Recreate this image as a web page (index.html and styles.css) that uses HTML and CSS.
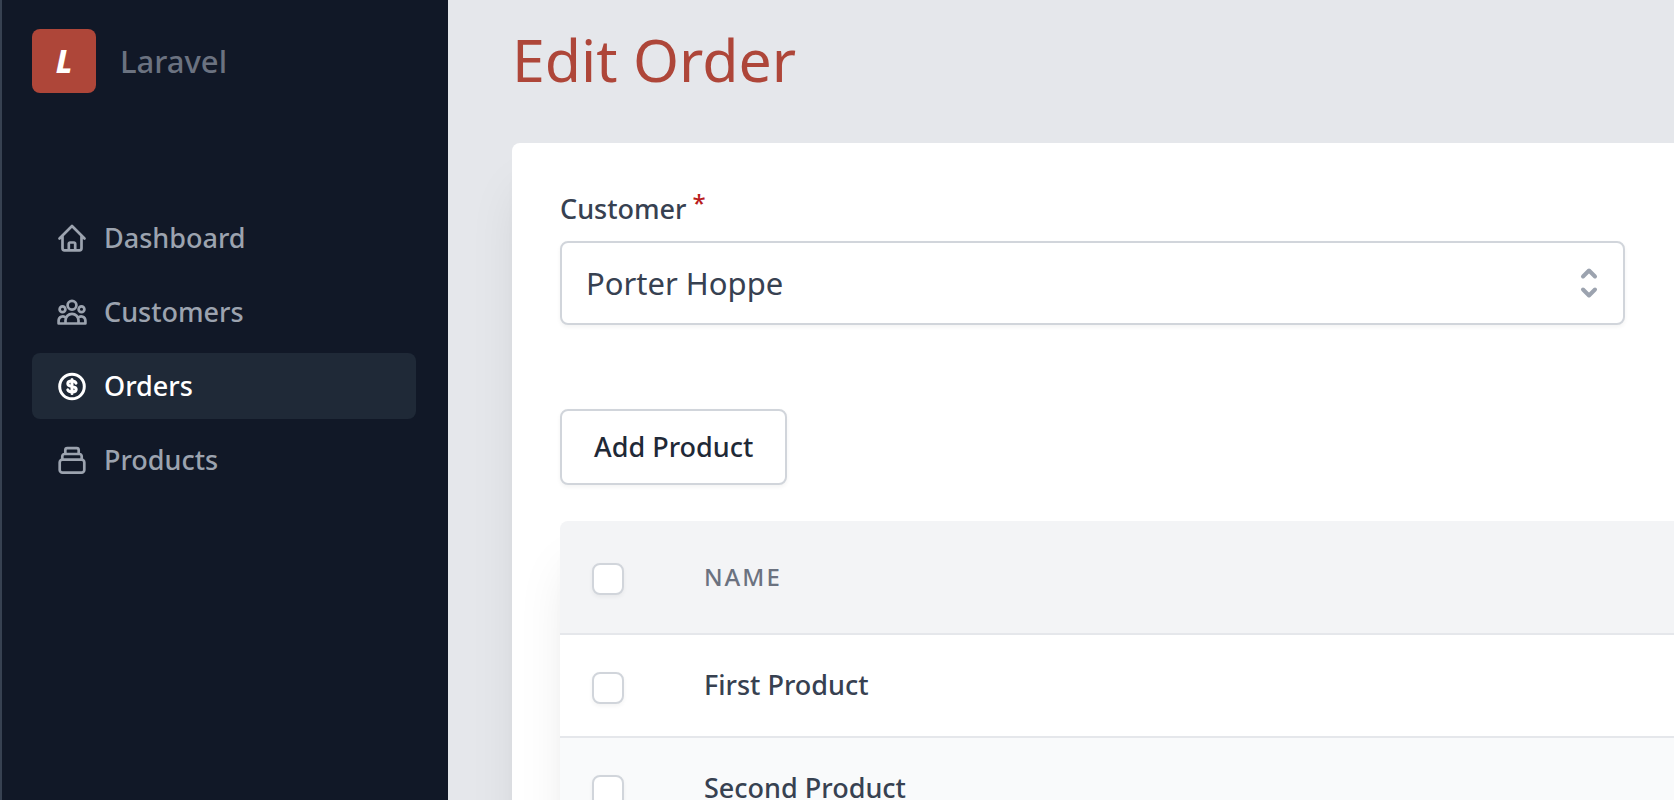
FILE: index.html
```html
<!DOCTYPE html>
<html lang="en">
<head>
<meta charset="utf-8">
<meta name="viewport" content="width=device-width, initial-scale=1">
<title>Edit Order</title>
<link rel="stylesheet" href="styles.css">
</head>
<body>
<div class="app">
  <aside class="sidebar">
    <a class="brand" href="#"><span class="brand-mark">L</span><span>Laravel</span></a>
    <nav class="nav">
      <a class="nav-link" href="#">
        <svg class="icon" viewBox="0 0 32 32" aria-hidden="true"><path d="M3.5 16.500 16 4 28.500 16.500M6.500 14v12.300a2 2 0 0 0 2 2h15a2 2 0 0 0 2-2V14M12.800 28v-6.300a1.200 1.200 0 0 1 1.200-1.200h4a1.200 1.200 0 0 1 1.200 1.200V28"/></svg>
        <span>Dashboard</span>
      </a>
      <a class="nav-link" href="#">
        <svg class="icon" viewBox="0 0 32 32" aria-hidden="true"><circle cx="16" cy="9.200" r="4.400"/><circle cx="6.500" cy="13.200" r="2.900"/><circle cx="25.500" cy="13.200" r="2.900"/><path d="M9.500 27.500v-3.200a6.500 6.500 0 0 1 13 0v3.200ZM9.500 27.500H2.600v-2.800a4.200 4.200 0 0 1 7.200-2.900M22.500 27.500h6.900v-2.800a4.200 4.200 0 0 0-7.200-2.900"/></svg>
        <span>Customers</span>
      </a>
      <a class="nav-link nav-link-active" href="#" aria-current="page">
        <svg class="icon icon-strong" viewBox="0 0 32 32" aria-hidden="true"><circle cx="16" cy="16.500" r="12.300"/><path d="M20 13.100c-.5-1.200-2-2-4-2-2.400 0-4.200 1-4.200 2.700 0 3.900 8.400 1.500 8.400 5.400 0 1.700-1.800 2.700-4.200 2.700-2 0-3.500-.8-4.200-2M16 9.500v14"/></svg>
        <span>Orders</span>
      </a>
      <a class="nav-link" href="#">
        <svg class="icon" viewBox="0 0 32 32" aria-hidden="true"><path d="M9.300 9.500V6.200a2 2 0 0 1 2-2h9.400a2 2 0 0 1 2 2v3.300M6.300 15.500v-3.300a2.200 2.200 0 0 1 2.200-2.200h15a2.200 2.200 0 0 1 2.200 2.200v3.300"/><rect x="3.700" y="15.700" width="24.600" height="13" rx="2.800"/></svg>
        <span>Products</span>
      </a>
    </nav>
  </aside>
  <main class="main">
    <h1 class="title">Edit Order</h1>
    <form class="card">
      <div class="field">
        <label class="label" for="customer">Customer<span class="required">*</span></label>
        <div class="select-wrap">
          <select class="select" id="customer"><option>Porter Hoppe</option></select>
          <svg class="select-icon" viewBox="0 0 40 40" aria-hidden="true"><path d="m14 13.500 6-6 6 6M14 26.500l6 6 6-6"/></svg>
        </div>
      </div>
      <button class="button" type="button">Add Product</button>
      <table class="table">
        <thead>
          <tr><th class="check-cell"><input class="checkbox" type="checkbox" aria-label="Select all"></th><th class="name-cell">NAME</th></tr>
        </thead>
        <tbody>
          <tr><td class="check-cell"><input class="checkbox" type="checkbox" id="p1"></td><td class="name-cell"><label for="p1">First Product</label></td></tr>
          <tr><td class="check-cell"><input class="checkbox" type="checkbox" id="p2"></td><td class="name-cell"><label for="p2">Second Product</label></td></tr>
        </tbody>
      </table>
    </form>
  </main>
</div>
</body>
</html>
```
FILE: styles.css
```css
*, *::before, *::after { box-sizing: border-box; }
body {
  margin: 0;
  font-family: "Noto Sans", "Open Sans", sans-serif;
  font-size: 27px;
  line-height: 40px;
  color: #374151;
}
.app {
  display: flex;
  height: 100vh;
  overflow: hidden;
  background: #e5e7eb;
}
.sidebar {
  flex: 0 0 448px;
  padding: 29px 32px 0 30px;
  border-left: 2px solid #374151;
  background: #111827;
}
.brand {
  display: flex;
  align-items: center;
  gap: 24px;
  color: #6b7280;
  font-size: 31px;
  font-weight: 500;
  text-decoration: none;
}
.brand-mark {
  display: flex;
  align-items: center;
  justify-content: center;
  width: 64px;
  height: 64px;
  border-radius: 8px;
  background: #ae4639;
  color: #fff;
  font-size: 32px;
  font-weight: 800;
  font-style: italic;
}
.nav {
  display: flex;
  flex-direction: column;
  gap: 8px;
  margin-top: 112px;
}
.nav-link {
  display: flex;
  align-items: center;
  gap: 16px;
  padding: 13px 24px;
  border-radius: 8px;
  color: #9ca3af;
  font-weight: 500;
  text-decoration: none;
}
.nav-link-active { background: #1f2937; color: #fff; }
.icon {
  width: 32px;
  height: 32px;
  fill: none;
  stroke: currentColor;
  stroke-width: 2.7;
  stroke-linecap: round;
  stroke-linejoin: round;
}
.icon-strong { stroke-width: 3; }
.main {
  flex: 1;
  min-width: 0;
  padding: 23px 0 0 64px;
}
.title {
  margin: 0 0 48px;
  color: #ae4639;
  font-size: 59px;
  font-weight: 400;
  line-height: 72px;
}
.card {
  padding: 48px 0 48px 48px;
  border-radius: 8px 0 0 8px;
  background: #fff;
  box-shadow: 0 40px 50px -10px rgba(0, 0, 0, .1), 0 20px 20px -10px rgba(0, 0, 0, .04);
}
.field { margin: 0 49px 84px 0; }
.label {
  display: flex;
  gap: 6px;
  margin-bottom: 14px;
  font-weight: 500;
  line-height: 36px;
}
.required {
  color: #b91c1c;
  font-size: 24px;
  line-height: 24px;
}
.select-wrap { position: relative; }
.select {
  display: block;
  width: 100%;
  height: 84px;
  padding: 0 80px 0 24px;
  border: 2px solid #d1d5db;
  border-radius: 8px;
  appearance: none;
  background: #fff;
  color: #374151;
  font: inherit;
  font-size: 31px;
  box-shadow: 0 2px 4px rgba(0, 0, 0, .05);
}
.select-icon {
  position: absolute;
  top: 22px;
  right: 16px;
  width: 40px;
  height: 40px;
  fill: none;
  stroke: #9ca3af;
  stroke-width: 4;
  stroke-linecap: round;
  stroke-linejoin: round;
  pointer-events: none;
}
.button {
  display: block;
  padding: 16px 32px;
  border: 2px solid #d1d5db;
  border-radius: 8px;
  background: #fff;
  color: #1f2937;
  font: inherit;
  font-weight: 500;
  box-shadow: 0 2px 4px rgba(0, 0, 0, .05);
}
.table {
  width: 100%;
  margin-top: 36px;
  border-collapse: separate;
  border-spacing: 0;
  border-radius: 8px 0 0 8px;
  background: #fff;
  box-shadow: 0 40px 50px -10px rgba(0, 0, 0, .1), 0 20px 20px -10px rgba(0, 0, 0, .04);
}
.table th, .table td { text-align: left; font-weight: 500; }
.table th {
  height: 114px;
  padding: 0;
  border-bottom: 2px solid #e5e7eb;
  background: #f3f4f6;
  color: #6b7280;
  font-size: 24px;
  letter-spacing: 2px;
}
.table th:first-child { border-top-left-radius: 8px; }
.table td {
  height: 103px;
  padding: 0 0 2px;
  border-bottom: 2px solid #e5e7eb;
}
.table tbody tr:nth-child(even) td { background: #f9fafb; }
.table .check-cell { width: 144px; padding: 4px 0 0 32px; }
.checkbox {
  display: block;
  width: 32px;
  height: 32px;
  margin: 0;
  border: 2px solid #d1d5db;
  border-radius: 8px;
  appearance: none;
  background: #fff;
  box-shadow: 0 2px 4px rgba(0, 0, 0, .05);
}
```
